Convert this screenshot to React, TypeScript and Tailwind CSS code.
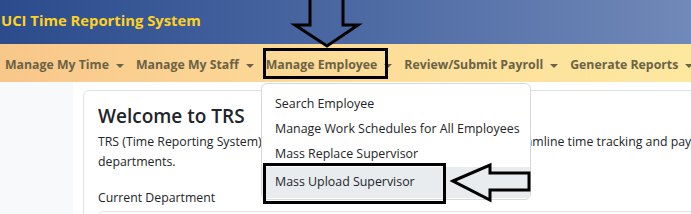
import React from "react";

const navItems = [
  "Manage My Time",
  "Manage My Staff",
  "Manage Employee",
  "Review/Submit Payroll",
  "Generate Reports",
];

const menuItems = [
  "Search Employee",
  "Manage Work Schedules for All Employees",
  "Mass Replace Supervisor",
  "Mass Upload Supervisor",
];

function Caret() {
  return (
    <span className="ml-[7px] inline-block w-0 h-0 border-l-[4px] border-r-[4px] border-t-[4px] border-l-transparent border-r-transparent border-t-[#6b6245] translate-y-[1px]" />
  );
}

export default function App() {
  return (
    <div
      className="relative w-[691px] h-[214px] overflow-hidden bg-[#f8f9fa] text-[#212529]"
      style={{ fontFamily: '"Open Sans", "Noto Sans", sans-serif' }}
    >
      {/* Header */}
      <div className="h-[44px] flex items-center pl-[1px] pb-[3px] bg-gradient-to-r from-[#2b4b8c] via-[#4b68a2] to-[#7189b8]">
        <span className="text-[14.8px] font-bold text-[#ffd21f]">
          UCI Time Reporting System
        </span>
      </div>

      {/* Nav */}
      <div className="h-[38px] flex items-center pl-[5px] pt-[4px] gap-[12px] bg-gradient-to-r from-[#f8c78a] via-[#fcdc98] to-[#fde8a0] text-[12.3px] font-bold text-[#6b6245]">
        {navItems.map((item) => (
          <div key={item} className="flex items-center whitespace-nowrap">
            {item}
            <Caret />
          </div>
        ))}
      </div>

      {/* Body */}
      <div className="flex">
        <div className="w-[73px] shrink-0" />
        <div className="flex-1 bg-white pl-[10px] pt-[8px] h-[140px]">
          <div className="border border-[#dee2e6] rounded-[6px] px-[14px] pt-[12px] h-[200px]">
            <div className="text-[19px] font-semibold text-[#212529] leading-[26px]">
              Welcome to TRS
            </div>
            <p className="mt-[3px] text-[12.3px] leading-[20px] text-[#212529] whitespace-nowrap">
              TRS (Time Reporting System) is the Web-based application designed to streamline time tracking and payroll processing for UCI
              <br />
              departments.
            </p>
            <div className="mt-[16px] text-[12.3px] leading-[20px]">Current Department</div>
            <div className="mt-[3px] h-[30px] border border-[#dee2e6] rounded-[5px]" />
          </div>
        </div>
      </div>

      {/* Dropdown menu */}
      <div className="absolute left-[261px] top-[83px] w-[270px] h-[117px] bg-white border border-[#d6d9dc] rounded-[6px] pt-[8px] text-[12.4px] text-[#212529]">
        {menuItems.map((m, i) => (
          <div
            key={m}
            className={`flex items-center pl-[13px] whitespace-nowrap ${
              i === 3 ? "bg-[#e9ecef] h-[31px]" : "h-[25px]"
            }`}
          >
            {m}
          </div>
        ))}
      </div>

      {/* Annotation boxes */}
      <div className="absolute left-[263px] top-[48px] w-[125px] h-[31px] border-[3px] border-black" />
      <div className="absolute left-[263px] top-[163px] w-[183px] h-[41px] border-[3px] border-black" />

      {/* Annotation arrows */}
      <svg className="absolute left-0 top-0 pointer-events-none" width="691" height="214">
        <polygon
          points="310,-4 343,-4 343,25 358,25 327,46 295,25 310,25"
          fill="none"
          stroke="black"
          strokeWidth="3"
          strokeLinejoin="miter"
        />
        <polygon
          points="453,181 490,165 490,173 529,173 529,190 490,190 490,200"
          fill="none"
          stroke="black"
          strokeWidth="3"
          strokeLinejoin="miter"
        />
      </svg>
    </div>
  );
}
